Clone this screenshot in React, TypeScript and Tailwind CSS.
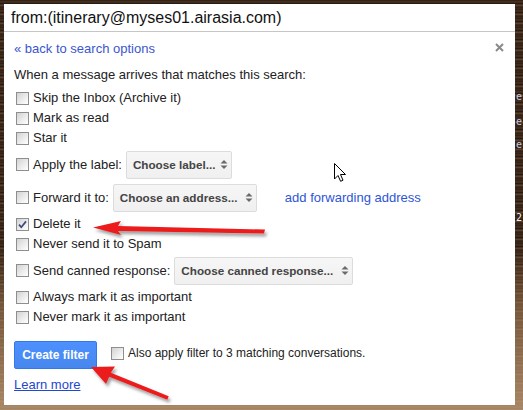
import React from "react";

function Box({ checked }: { checked?: boolean }) {
  return (
    <span className="ml-[2px] mr-[4px] block w-[13px] h-[13px] shrink-0 border border-[#8e8e8e] bg-[linear-gradient(135deg,#d2d2d2_0%,#ececec_55%,#ffffff_100%)]">
      {checked && (
        <svg viewBox="0 0 11 11" className="block w-[11px] h-[11px]">
          <path d="M2 5.6 L4.3 8.2 L9 2.4" fill="none" stroke="#3d4a78" strokeWidth="1.7" />
        </svg>
      )}
    </span>
  );
}

function Sel({ label, w }: { label: string; w: string }) {
  return (
    <div
      className={`${w} h-[28px] flex items-center justify-between pl-[6px] pr-[3px] rounded-[2px] border border-[#dcdcdc] bg-[linear-gradient(#f6f6f6,#f0f0f0)] text-[11.7px] font-bold text-[#444]`}
    >
      <span>{label}</span>
      <svg viewBox="0 0 8 11" className="w-[8px] h-[11px]">
        <path d="M0.5 4.5 L4 1 L7.5 4.5 Z" fill="#6a6a6a" />
        <path d="M0.5 6.5 L4 10 L7.5 6.5 Z" fill="#6a6a6a" />
      </svg>
    </div>
  );
}

function Row({ label, checked }: { label: string; checked?: boolean }) {
  return (
    <div className="h-[20px] flex items-center">
      <Box checked={checked} />
      <span>{label}</span>
    </div>
  );
}

function SelRow({ label, children }: { label: string; children: React.ReactNode }) {
  return (
    <div className="h-[33px] flex items-center">
      <Box />
      <span className="mr-[4px]">{label}</span>
      {children}
    </div>
  );
}

export default function App() {
  return (
    <div className="relative w-[523px] h-[410px] overflow-hidden pt-[4px] pl-[4px] font-['Liberation_Sans',Arial,sans-serif] bg-[linear-gradient(180deg,rgba(0,0,0,0)_0%,rgba(0,0,0,0)_60%,rgba(170,130,90,0.55)_75%,rgba(205,168,128,0.75)_100%),repeating-linear-gradient(180deg,#2a1b11_0px,#4b3424_2px,#1c120b_4px,#6a4c36_5px,#2f1f14_7px,#3e2a1b_9px)]">
      {/* right strip fragments */}
      <div className="absolute left-[516px] top-[91px] text-[10px] leading-[12px] text-[#c7cbe0] font-['DejaVu_Sans_Mono',monospace]">e</div>
      <div className="absolute left-[516px] top-[116px] text-[10px] leading-[12px] text-[#c7cbe0] font-['DejaVu_Sans_Mono',monospace]">e</div>
      <div className="absolute left-[516px] top-[139px] text-[10px] leading-[12px] text-[#c7cbe0] font-['DejaVu_Sans_Mono',monospace]">e</div>
      <div className="absolute left-[516px] top-[212px] text-[10px] leading-[12px] text-[#f0f0f0] font-['DejaVu_Sans_Mono',monospace]">2</div>

      <div className="relative w-[511px] h-[401px] bg-white flex flex-col text-[#222]">
        <div className="h-[28px] shrink-0 border-b border-[#c6c6c6] flex items-center pl-[7px] text-[16px] text-[#111]">
          from:(itinerary@myses01.airasia.com)
        </div>

        <div className="pl-[10px] pr-[11px] text-[13px] leading-[16px]">
          <div className="mt-[9px] flex items-center justify-between h-[16px]">
            <span className="text-[#3a55d0]">« back to search options</span>
            <svg viewBox="0 0 9 9" className="w-[9px] h-[9px] -mt-[3px]">
              <path d="M1 1 L8 8 M8 1 L1 8" stroke="#8a8a8a" strokeWidth="2" />
            </svg>
          </div>

          <div className="mt-[10px]">When a message arrives that matches this search:</div>

          <div className="mt-[5px] flex flex-col">
            <Row label="Skip the Inbox (Archive it)" />
            <Row label="Mark as read" />
            <Row label="Star it" />
            <SelRow label="Apply the label:">
              <Sel label="Choose label..." w="w-[106px]" />
            </SelRow>
            <SelRow label="Forward it to:">
              <Sel label="Choose an address..." w="w-[144px]" />
              <span className="ml-[28px] text-[#2e55d6]">add forwarding address</span>
            </SelRow>
            <Row label="Delete it" checked />
            <Row label="Never send it to Spam" />
            <SelRow label="Send canned response:">
              <Sel label="Choose canned response..." w="w-[179px]" />
            </SelRow>
            <Row label="Always mark it as important" />
            <Row label="Never mark it as important" />
          </div>

          <div className="mt-[14px] flex items-start">
            <div className="w-[83px] h-[28px] flex items-center justify-center rounded-[2px] border border-[#3079ed] bg-[linear-gradient(#4d90fe,#4787ed)] text-white text-[12px] font-bold">
              Create filter
            </div>
            <div className="ml-[12px] mt-[4px] h-[16px] flex items-center text-[12px]">
              <Box />
              <span>Also apply filter to 3 matching conversations.</span>
            </div>
          </div>

          <div className="mt-[8px]">
            <span className="text-[#2447d0] underline">Learn more</span>
          </div>
        </div>
      </div>

      {/* annotation overlay */}
      <svg className="absolute left-0 top-0 pointer-events-none" width="523" height="410" viewBox="0 0 523 410">
        <defs>
          <filter id="sh" x="-20%" y="-50%" width="140%" height="200%">
            <feDropShadow dx="2" dy="3" stdDeviation="1.5" floodColor="#555" floodOpacity="0.55" />
          </filter>
        </defs>
        <polygon
          filter="url(#sh)"
          fill="#ec1b1b"
          points="93,227.5 121,221 118,226 265,229.5 264,233.5 118,231 121,235"
        />
        <polygon
          filter="url(#sh)"
          fill="#ec1b1b"
          points="91,367 115,366.5 110.8,372.7 168.7,396.3 167.3,399.7 109.2,376.7 106,384"
        />
        <polygon
          points="334.5,163.5 334.5,179 338,175.5 340.6,181.3 343,180.2 340.5,174.5 345.5,174.5"
          fill="#fff"
          stroke="#000"
          strokeWidth="1"
          strokeLinejoin="round"
        />
      </svg>
    </div>
  );
}
